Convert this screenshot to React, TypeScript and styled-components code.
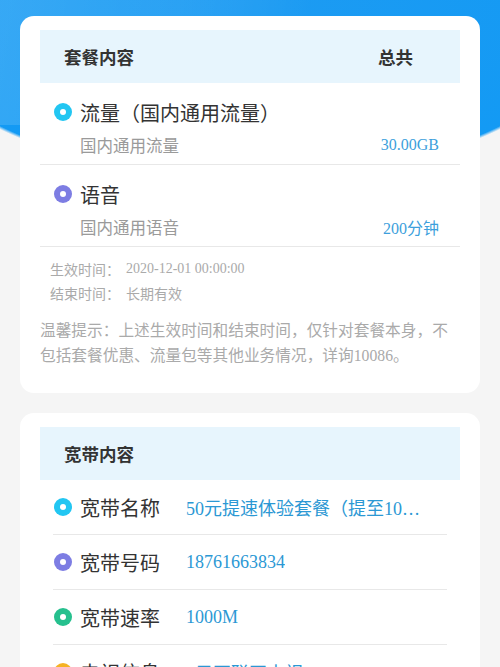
import React from "react";
import styled, { createGlobalStyle } from "styled-components";

const GlobalStyle = createGlobalStyle`
  html, body {
    margin: 0;
    padding: 0;
  }
  body {
    background-color: #f5f5f5;
    background-image:
      radial-gradient(ellipse 360px 180px at 50% 0, #1d9bf2 0, #139af4 98.5%, rgba(19,154,244,0) 100%);
    background-repeat: no-repeat;
    font-family: "Noto Sans CJK SC", "Noto Sans", sans-serif;
    width: 500px;
    overflow: hidden;
  }
`;

const Page = styled.div`
  display: flex;
  flex-direction: column;
  gap: 20px;
  padding: 16px 20px 0;
  height: 651px;
  overflow: hidden;
  background: linear-gradient(100deg, rgba(255,255,255,0.14) 0%, rgba(255,255,255,0.06) 40%, rgba(255,255,255,0) 60%) no-repeat;
  background-size: 100% 125px;
`;

const Card = styled.section<{ $pb?: number }>`
  background: #ffffff;
  border-radius: 14px;
  padding: 14px 20px ${(p) => p.$pb ?? 0}px;
  flex-shrink: 0;
`;

const Band = styled.div`
  height: 53px;
  background: #e7f5fd;
  display: flex;
  align-items: center;
  justify-content: space-between;
  padding: 0 47px 0 24px;
  font-size: 17.5px;
  font-weight: 700;
  color: #333333;
`;

const Dot = styled.span<{ $c: string }>`
  width: 18px;
  height: 18px;
  border-radius: 50%;
  background: ${(p) => p.$c};
  display: inline-flex;
  align-items: center;
  justify-content: center;
  flex-shrink: 0;
  &::after {
    content: "";
    width: 6px;
    height: 6px;
    border-radius: 50%;
    background: #ffffff;
  }
`;

const PlanRow = styled.div`
  padding: 15px 21px 7px 14px;
  border-bottom: 1px solid #e8e8e8;
`;

const PlanTitle = styled.div`
  display: flex;
  align-items: center;
  gap: 8px;
  height: 28px;
  font-size: 20px;
  color: #333333;
`;

const PlanSub = styled.div`
  display: flex;
  justify-content: space-between;
  align-items: center;
  height: 24px;
  margin-top: 7px;
  padding-left: 26px;
  font-size: 16.5px;
  color: #9a9a9a;
`;

const PlanValue = styled.span`
  font-family: "Liberation Serif", "Noto Sans CJK SC", serif;
  font-size: 16px;
  color: #3d9fdc;
`;

const Dates = styled.div`
  padding: 10px 0 0 10px;
  display: flex;
  flex-direction: column;
`;

const DateLine = styled.div`
  height: 24px;
  display: flex;
  align-items: center;
  font-size: 14px;
  color: #aaaaaa;
`;

const DateLabel = styled.span`
  width: 76px;
`;

const DateValue = styled.span`
  font-family: "Liberation Serif", "Noto Sans CJK SC", serif;
  font-size: 14px;
`;

const Notice = styled.p`
  margin: 12px 0 0;
  font-size: 15.7px;
  line-height: 25px;
  color: #aaaaaa;
  font-family: "Noto Sans CJK SC", sans-serif;
`;

const Num = styled.span`
  font-family: "Liberation Serif", serif;
`;

const InfoList = styled.div`
  padding: 0 13px;
`;

const InfoRow = styled.div`
  height: 54px;
  display: flex;
  align-items: center;
  border-bottom: 1px solid #e8e8e8;
  padding-left: 1px;
`;

const InfoLabel = styled.span`
  margin-left: 8px;
  width: 80px;
  font-size: 20px;
  color: #333333;
  white-space: nowrap;
  flex-shrink: 0;
`;

const InfoValue = styled.span`
  margin-left: 26px;
  font-family: "Liberation Serif", "Noto Sans CJK SC", serif;
  font-size: 18px;
  color: #2b98d4;
  white-space: nowrap;
  overflow: hidden;
  text-overflow: ellipsis;
`;

const plans = [
  { c: "#22c6f2", title: "流量（国内通用流量）", sub: "国内通用流量", value: "30.00GB" },
  { c: "#7d7de3", title: "语音", sub: "国内通用语音", value: "200分钟" },
];

const infos = [
  { c: "#22c6f2", label: "宽带名称", value: "50元提速体验套餐（提至10…" },
  { c: "#7d7de3", label: "宽带号码", value: "18761663834" },
  { c: "#26c08e", label: "宽带速率", value: "1000M" },
  { c: "#f5b324", label: "电视信息", value: "1只互联网电视" },
];

export default function App() {
  return (
    <>
      <GlobalStyle />
      <Page>
        <Card $pb={25}>
          <Band>
            <span>套餐内容</span>
            <span>总共</span>
          </Band>
          {plans.map((p) => (
            <PlanRow key={p.title}>
              <PlanTitle>
                <Dot $c={p.c} />
                {p.title}
              </PlanTitle>
              <PlanSub>
                <span>{p.sub}</span>
                <PlanValue>{p.value}</PlanValue>
              </PlanSub>
            </PlanRow>
          ))}
          <Dates>
            <DateLine>
              <DateLabel>生效时间：</DateLabel>
              <DateValue>2020-12-01 00:00:00</DateValue>
            </DateLine>
            <DateLine>
              <DateLabel>结束时间：</DateLabel>
              <span>长期有效</span>
            </DateLine>
          </Dates>
          <Notice>
            温馨提示：上述生效时间和结束时间，仅针对套餐本身，不包括套餐优惠、流量包等其他业务情况，详询<Num>10086</Num>。
          </Notice>
        </Card>
        <Card>
          <Band>
            <span>宽带内容</span>
          </Band>
          <InfoList>
            {infos.map((i) => (
              <InfoRow key={i.label}>
                <Dot $c={i.c} />
                <InfoLabel>{i.label}</InfoLabel>
                <InfoValue>{i.value}</InfoValue>
              </InfoRow>
            ))}
          </InfoList>
        </Card>
      </Page>
    </>
  );
}
